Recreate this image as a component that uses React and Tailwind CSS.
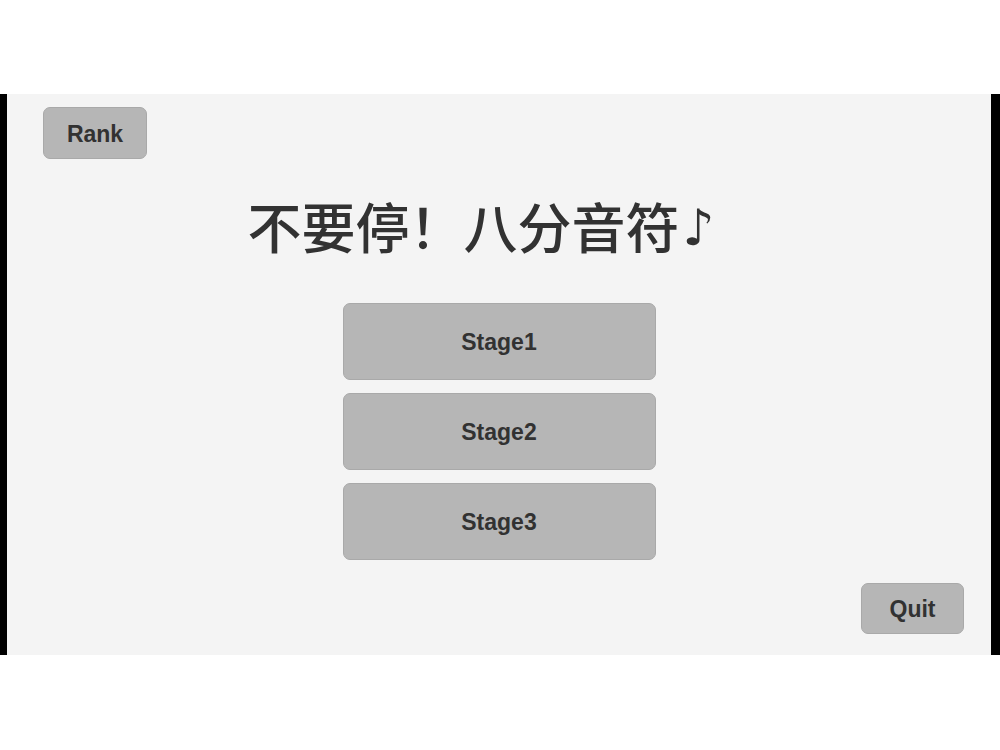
const btn =
  'flex items-center justify-center rounded-[7px] border border-[#a9a9a9] bg-[#b6b6b6] pt-[2px] text-[23px] font-bold text-[#323232] font-["Liberation_Sans",Arial,sans-serif]'

export default function App() {
  return (
    <div className="h-[750px] w-[1000px] bg-white pt-[94px]">
      <div className="flex h-[561px] flex-col border-l-[7px] border-r-[9px] border-black bg-[#f4f4f4]">
        <div className="pl-[36px] pt-[13px]">
          <button type="button" className={`${btn} h-[52px] w-[104px]`}>
            Rank
          </button>
        </div>

        <h1 className='mt-[37px] flex h-[60px] items-center justify-center pr-[36px] text-[54px] font-medium leading-[60px] text-[#323232] font-["Noto_Sans_CJK_SC",sans-serif]'>
          不要停！八分音符
          <span className='ml-[3px] mt-[4px] text-[50px] leading-none font-["DejaVu_Sans",sans-serif]'>♪</span>
        </h1>

        <div className="mx-auto mt-[47px] flex w-[313px] flex-col gap-[13px]">
          {['Stage1', 'Stage2', 'Stage3'].map((s) => (
            <button key={s} type="button" className={`${btn} h-[77px] w-full`}>
              {s}
            </button>
          ))}
        </div>

        <div className="mt-[23px] flex justify-end pr-[27px]">
          <button type="button" className={`${btn} h-[51px] w-[103px]`}>
            Quit
          </button>
        </div>
      </div>
    </div>
  )
}
